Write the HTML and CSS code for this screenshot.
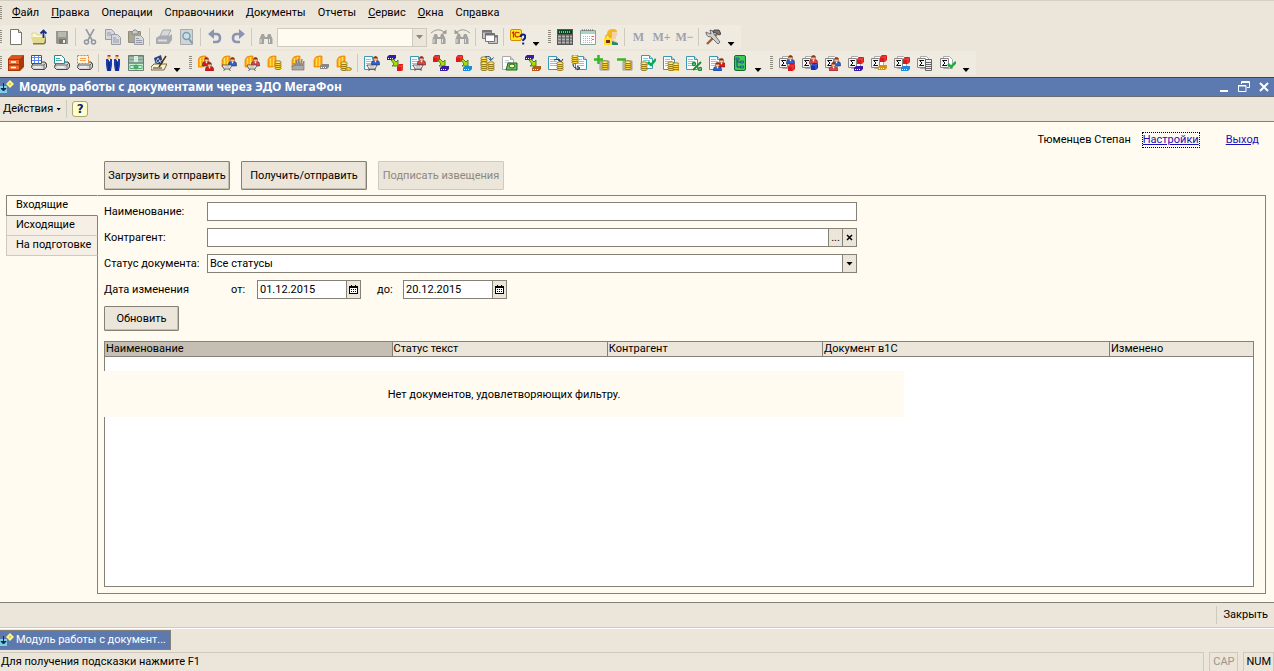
FILE: index.html
```html
<!DOCTYPE html>
<html lang="ru">
<head>
<meta charset="utf-8">
<title>Модуль работы с документами через ЭДО МегаФон</title>
<link rel="stylesheet" href="styles.css">
</head>
<body>
<svg class="defs" aria-hidden="true">
<defs>
<g id="doc"><path d="M.5 1.500h8l3 3v10h-11z" fill="#fff" stroke="#3c98b4"/><path d="M8.500 1.500v3h3" fill="#cde" stroke="#3c98b4"/><path d="M2 4.500h5M2 6.500h7M2 8.500h7M2 10.500h7" stroke="#7accdc"/></g>
<g id="graydoc"><path d="M2.500 1.500h8l3 3v10h-11z" fill="#fff" stroke="#aaa"/><path d="M10.500 1.500v3h3" fill="#ccc" stroke="#aaa"/><path d="M5 5.500h4M5 7.500h6" stroke="#ccc"/></g>
<g id="sigma"><path d="M3.500 1.500h6l3 3v9h-9z" fill="#fff" stroke="#aaa"/><path d="M.5 3.500h8v9h-8z" fill="#f4f4f4" stroke="#888"/><path d="M7 5.500H2.500L5 8l-2.500 2.500H7" fill="none" stroke="#111"/></g>
<g id="coin"><g fill="#ffd83a" stroke="#80640c" stroke-width=".8"><ellipse cx="4" cy="8.200" rx="3.200" ry="1.400"/><ellipse cx="4" cy="6.200" rx="3.200" ry="1.400"/><ellipse cx="4" cy="4.200" rx="3.200" ry="1.400"/><ellipse cx="4" cy="2.200" rx="3.200" ry="1.400" fill="#ffee80"/></g></g>
<g id="man"><path d="M.5 9V7q0-2.500 2.500-2.500h3q2.500 0 2.500 2.500v2z" fill="currentColor" stroke="#223" stroke-width=".5"/><circle cx="4.500" cy="2.900" r="2.100" fill="#ffc49a" stroke="#8a3a18" stroke-width=".5"/><path d="M2.300 2.500q0-2.300 2.200-2.300t2.200 2.300z" fill="#8a3214"/><path d="M3.500 4.800h2l-1 2z" fill="#fff"/></g>
<g id="cube"><path d="M0 2l2-2h5v5l-2 2H0z" fill="currentColor"/><path d="M0 2h5l2-2M5 2v5" fill="none" stroke="#fff" stroke-opacity=".4" stroke-width=".6"/></g>
<g id="bar"><path d="M0 2l2-2h7v3L7 5H0z" fill="currentColor"/><path d="M1 3.500h6" stroke="#fff" stroke-dasharray="1 1"/></g>
<g id="basket"><path d="M0 1h10L8 5H2zM3 5L1.500 7M7 5l1.500 2" fill="#fff" stroke="#444" stroke-width=".8"/><path d="M2 3h6M4 1v4M6 1v4" stroke="#888" stroke-width=".5"/></g>
<g id="arrow"><path d="M0 1l2-1 3 3 2-2v6H1l2-2z" fill="#a4e00a" stroke="#2f7000" stroke-width=".8"/></g>
<g id="book"><path d="M1 5q1-4 5-4h3v9l-3 2H1z" fill="#ff9c10"/><path d="M3.500 3v8M6.500 2v9" stroke="#ffe24a" stroke-width="1.600"/><path d="M1 5q1-4 5-4h3v9l-3 2H1z" fill="none" stroke="#e88400" stroke-width=".7"/></g>
<g id="tray"><path d="M1 10l3-3h10l1.500 2v3l-2 2.500H2.500l-2-2z" fill="#d6d6d6" stroke="#333" stroke-width=".9"/><path d="M1 10h12l2-2M13 10v4" fill="none" stroke="#555" stroke-width=".8"/><path d="M3 12h7" stroke="#fff"/></g>
<g id="binoc"><path d="M1.500 14V9l2-5H6l1 3h2l1-3h2.500l2 5v5H10V9H6v5z" fill="#a2a2a0"/><path d="M3 9v4M11.500 9v4" stroke="#e2e2e0"/></g>

<symbol id="i-new" viewBox="0 0 16 16"><path d="M2.500.500h8l3 3v12h-11z" fill="#fff" stroke="#77746c"/><path d="M10.500.500v3h3" fill="#ddd" stroke="#77746c"/></symbol>
<symbol id="i-open" viewBox="0 0 16 16"><path d="M1 7V4h4l1 2h6v3" fill="#fffbc8" stroke="#cfc060" stroke-width=".6"/><path d="M0 8h11l4-2-2 8H2z" fill="#e2da8c"/><path d="M2 14h11l2-8v8l-2 1.500H2z" fill="#817c38"/><path d="M12.500 9V2M9.500 4.500l3-3 3 3" fill="none" stroke="#19308c" stroke-width="1.800"/></symbol>
<symbol id="i-save" viewBox="0 0 16 16"><path d="M2 2h12v13H3l-1-1z" fill="#96978f"/><path d="M4 3h8v5H4z" fill="#b9baae"/><path d="M5 10h7v5H5z" fill="#777870"/><path d="M9 11h2v3H9z" fill="#eee"/></symbol>
<symbol id="i-cut" viewBox="0 0 16 16"><path d="M4 0l6 11M12 0L6 11" stroke="#9599a4" stroke-width="1.600"/><circle cx="4.500" cy="13" r="2" fill="none" stroke="#8e94a2" stroke-width="1.500"/><circle cx="11.500" cy="13" r="2" fill="none" stroke="#8e94a2" stroke-width="1.500"/></symbol>
<symbol id="i-copy" viewBox="0 0 16 16"><path d="M.5.500h6l3 3v7h-9z" fill="#d6d8de" stroke="#989ba8"/><path d="M2 4h4M2 6h5" stroke="#989ba8"/><path d="M6.500 5.500h6l3 3v7h-9z" fill="#d6d8de" stroke="#989ba8"/><path d="M8 9h3M8 11h6M8 13h6" stroke="#989ba8"/></symbol>
<symbol id="i-paste" viewBox="0 0 16 16"><path d="M.5 2.500h12v11H.5z" fill="#aaa78e" stroke="#8f8d7b"/><path d="M4 3l2-2h2l2 2v2H4z" fill="#ccc" stroke="#888"/><path d="M6.500 6.500h6l3 3v6h-9z" fill="#d6d8de" stroke="#989ba8"/><path d="M8 9.500h3M8 11.500h6M8 13.500h6" stroke="#989ba8"/></symbol>
<symbol id="i-print" viewBox="0 0 16 16"><path d="M4 7l3-6h8l-3 6z" fill="#d7d8da" stroke="#a4a6aa"/><path d="M0 9l3-2h10l3-2v6l-3 4H0z" fill="#a9abb0"/><path d="M2 11.500h9" stroke="#ddd" stroke-width="2"/></symbol>
<symbol id="i-preview" viewBox="0 0 16 16"><path d="M1.500.500h12v15h-12z" fill="#d0d4d6" stroke="#a7abb0"/><circle cx="7.500" cy="7" r="3.500" fill="#c7e1e8" stroke="#7a9fae" stroke-width="1.500"/><path d="M10 10l3.500 4.500" stroke="#7a9fae" stroke-width="2"/></symbol>
<symbol id="i-undo" viewBox="0 0 16 16"><path d="M5 5h4q4 0 4 4t-4 4H6" fill="none" stroke="#8c94b4" stroke-width="2.600"/><path d="M1 5l6-5v10z" fill="#8c94b4"/></symbol>
<symbol id="i-redo" viewBox="0 0 16 16"><path d="M11 5H7Q3 5 3 9t4 4h3" fill="none" stroke="#8c94b4" stroke-width="2.600"/><path d="M15 5L9 0v10z" fill="#8c94b4"/></symbol>
<symbol id="i-find" viewBox="0 0 16 16"><use href="#binoc" y="1"/></symbol>
<symbol id="i-findnext" viewBox="0 0 16 16"><use href="#binoc" y="1"/><path d="M0 4q7-6 13-1" fill="none" stroke="#9a9a94"/><path d="M15.500 5V.500l-5 4z" fill="#9a9a94"/></symbol>
<symbol id="i-findprev" viewBox="0 0 16 16"><use href="#binoc" y="1"/><path d="M16 4q-7-6-13-1" fill="none" stroke="#9a9a94"/><path d="M.5 5V.500l5 4z" fill="#9a9a94"/></symbol>
<symbol id="i-windows" viewBox="0 0 16 16"><path d="M.5 1.500h9v8h-9z" fill="#c8c8c8" stroke="#777"/><path d="M.5 2.500h9" stroke="#777" stroke-width="2"/><path d="M6.500 6.500h9v8h-9z" fill="#c8c8c8" stroke="#777"/><path d="M6.500 7.500h9" stroke="#777" stroke-width="2"/><path d="M3.500 4.500h9v8h-9z" fill="#fff" stroke="#777"/><path d="M3 5.500h10" stroke="#6f7076" stroke-width="2"/></symbol>
<symbol id="i-help1c" viewBox="0 0 16 16"><rect x=".5" y=".5" width="11" height="11" rx="1.500" fill="#ffe51c" stroke="#d09000"/><path d="M2 4l1.500-1v5.500M9.500 4Q5 2 5 5.500T9.500 7.500" fill="none" stroke="#d12a00" stroke-width="1.200"/><path d="M10.500 8q0-2.500 2.500-2.500t2.200 2.500q0 1.500-2 3v1M13.200 13.500v2" fill="none" stroke="#12207c" stroke-width="2"/></symbol>
<symbol id="i-calc" viewBox="0 0 16 16"><path d="M0 0h16v16H0z" fill="#565656"/><path d="M1 1h14v4H1z" fill="#064a1c"/><path d="M2 3h12" stroke="#3fe070" stroke-width="2" stroke-dasharray="1 1"/><path d="M1 7.500h14M1 10.500h14M1 13.500h14" stroke="#b4b4b4" stroke-width="2" stroke-dasharray="3 1"/></symbol>
<symbol id="i-cal" viewBox="0 0 16 16"><path d="M.5 1.500h15v14H.5z" fill="#fff" stroke="#8aa09c"/><path d="M1 3.500h14" stroke="#a8d4c8" stroke-width="3"/><path d="M2 1h12" stroke="#555" stroke-dasharray="1 1"/><path d="M3 7.500h9M3 9.500h9M3 11.500h9M3 13.500h9" stroke="#9ac4bc" stroke-dasharray="1 1"/><path d="M12 7.500h2M12 10.500h2" stroke="#e66"/></symbol>
<symbol id="i-lock" viewBox="0 0 16 16"><path d="M6 9V4q0-4 4-4 4 0 4 4l1 2-2 1v3h-3l4 3v3H8z" fill="#f6d0a8"/><path d="M4 5q0-5 6-5 4 0 4 3H9v6H6z" fill="#f4b824"/><path d="M9 12l6 2v2H9z" fill="#288a72"/><path d="M3 10V7.500Q3 6 5 6t2 1.500V10" fill="none" stroke="#e8b800" stroke-width="1.500"/><path d="M1 9h8v7H1z" fill="#ffe22b"/><path d="M3 11h4v3H3z" fill="#7a3018"/></symbol>
<symbol id="i-tools" viewBox="0 0 16 16"><path d="M2 15L12 5" stroke="#a4602c" stroke-width="2.400"/><path d="M3 4l3 1-1-4q4 0 4 4l6 8-2 2-7-7Q1 8 1 3z" fill="#d0d0d0" stroke="#555" stroke-width=".8"/><path d="M9 1h5l2 4-2 1-3-2-3-1z" fill="#777" stroke="#333" stroke-width=".8"/></symbol>

<symbol id="i-cabinet" viewBox="0 0 16 16"><path d="M0 4l4-4h12v12l-4 4H0z" fill="#a8380c"/><path d="M1 5h10v4H1zM1 10.500h10v4H1z" fill="#f06a24"/><path d="M0 4l4-4h12l-4 4z" fill="#d8541c"/><path d="M3 7h5M3 12.500h5" stroke="#fff" stroke-width="1.500"/></symbol>
<symbol id="i-tray1" viewBox="0 0 16 16"><use href="#tray"/><path d="M.5.500h10v8H.5z" fill="#fff" stroke="#2354c6"/><path d="M1 2.500h9M1 5.500h9M3.500 1v7M7.500 1v7" stroke="#5c8af0"/></symbol>
<symbol id="i-tray2" viewBox="0 0 16 16"><use href="#tray"/><path d="M.5.500h7l3 3v5H.5z" fill="#fff" stroke="#218c8c"/><path d="M2 3.500h4M2 5.500h6" stroke="#3ab0b0"/></symbol>
<symbol id="i-tray3" viewBox="0 0 16 16"><use href="#tray"/><path d="M.5.500h11v8H.5z" fill="#fff3dc" stroke="#ef7a1c" stroke-dasharray="2 1"/><path d="M3 3.500h6M3 5.500h6" stroke="#f4a050"/></symbol>
<symbol id="i-people" viewBox="0 0 16 16"><path d="M1 4h6v6l-1 6H2l-1-6zM9 4h6v6l-1 6h-4l-1-6z" fill="#1a3cb0"/><path d="M4 5v11M12 5v11" stroke="#051c56"/><path d="M3 4h2v3zM11 4h2v3z" fill="#fff"/><path d="M2.500 1h3v3h-3zM10.500 1h3v3h-3z" fill="#f7bd8c"/><path d="M2.500 0h3v1.500h-3zM10.500 0h3v1.500h-3z" fill="#a83c18"/></symbol>
<symbol id="i-money" viewBox="0 0 16 16"><path d="M.5.500h15v15H.5z" fill="#7c9c8c" stroke="#6a7c74"/><path d="M1 3h14M1 6h14" stroke="#c9d9cf"/><path d="M1 9h14v6H1z" fill="#c6f4d2"/><path d="M2 10.500h12v3H2z" fill="none" stroke="#58b078"/><ellipse cx="8" cy="12" rx="2.500" ry="2.500" fill="#4aa869"/><path d="M6 1h4v6H6z" fill="#d8ecdf"/></symbol>
<symbol id="i-signs" viewBox="0 0 16 16"><path d="M3 3l7-3 2 8-7 3z" fill="#284583"/><path d="M5 7l2-4 3 5M4 9l7-4" fill="none" stroke="#dfe6f6" stroke-width=".8"/><path d="M0 12l3-3h13l-3 6H0z" fill="#f8f0cc" stroke="#554520" stroke-width=".8"/><path d="M8 12l7-11" stroke="#55330d" stroke-width="1.500"/><path d="M2 13h9" stroke="#333"/></symbol>
<symbol id="i-b1" viewBox="0 0 16 16"><use href="#book" x="-1"/><use href="#man" x="4" y="2" class="red"/><use href="#man" x="7" y="7" class="red"/></symbol>
<symbol id="i-b2" viewBox="0 0 16 16"><use href="#book"/><use href="#man" x="7" y="2" class="blue"/><use href="#basket" x="1" y="9"/></symbol>
<symbol id="i-b3" viewBox="0 0 16 16"><use href="#book"/><use href="#man" x="7" y="2" class="rose"/><use href="#basket" x="3" y="9"/></symbol>
<symbol id="i-b4" viewBox="0 0 16 16"><use href="#book"/><use href="#coin" x="7" y="5"/></symbol>
<symbol id="i-b5" viewBox="0 0 16 16"><use href="#book" x="1"/><path d="M2 15v-4h2V8l2 3V5l2 6V4l2 7 2-7v7l2-5v9z" fill="#aaa" stroke="#666" stroke-width=".6"/></symbol>
<symbol id="i-b6" viewBox="0 0 16 16"><use href="#book"/><use href="#bar" x="7" y="9" class="gray"/></symbol>
<symbol id="i-b7" viewBox="0 0 16 16"><use href="#book"/><use href="#coin" x="4" y="6"/><ellipse cx="12.500" cy="14" rx="3" ry="1.400" fill="#ffd83a" stroke="#80640c" stroke-width=".8"/></symbol>
<symbol id="i-d1" viewBox="0 0 16 16"><use href="#doc"/><use href="#man" x="7" y="1" class="blue"/><use href="#basket" x="3" y="9"/></symbol>
<symbol id="i-a1" viewBox="0 0 16 16"><use href="#bar" class="violet"/><use href="#arrow" x="4" y="4"/><use href="#cube" x="10" y="9" class="red"/></symbol>
<symbol id="i-d2" viewBox="0 0 16 16"><use href="#doc"/><use href="#man" x="7" y="1" class="rose"/><use href="#basket" x="3" y="9"/></symbol>
<symbol id="i-a2" viewBox="0 0 16 16"><use href="#cube" class="red"/><use href="#arrow" x="5" y="4"/><use href="#bar" x="7" y="11" class="violet"/></symbol>
<symbol id="i-a3" viewBox="0 0 16 16"><use href="#cube" class="red"/><use href="#arrow" x="5" y="4"/><use href="#bar" x="7" y="11" class="sky"/></symbol>
<symbol id="i-cc" viewBox="0 0 16 16"><use href="#coin" x="1" y="1"/><use href="#coin" x="1" y="6"/><use href="#coin" x="8" y="6"/><path d="M6 2q6-2 6 3M9.500 3.500l2.500 2 2.500-3" fill="none" stroke="#19486c"/></symbol>
<symbol id="i-d3" viewBox="0 0 16 16"><use href="#graydoc" x="-2"/><path d="M6 8h9v7H4z" fill="#76bd63" stroke="#176420"/><ellipse cx="10" cy="11" rx="3" ry="2" fill="#f4f6a0" stroke="#176420"/></symbol>
<symbol id="i-a4" viewBox="0 0 16 16"><use href="#bar" class="violet"/><use href="#arrow" x="4" y="4"/><use href="#bar" x="7" y="11" class="brown"/></symbol>
<symbol id="i-d4" viewBox="0 0 16 16"><use href="#doc"/><path d="M6 5q6-2 7 2M10 5l3 2 2-3" fill="none" stroke="#122a60"/><use href="#coin" x="8" y="6"/></symbol>
<symbol id="i-d5" viewBox="0 0 16 16"><use href="#doc" x="4"/><use href="#coin" x="0" y="-1"/><path d="M2 9q0 5 6 4M6 11l3 2-3 2" fill="none" stroke="#122a60"/></symbol>
<symbol id="i-plus" viewBox="0 0 16 16"><path d="M6 6h9v9H6z" fill="#c8c8c4" stroke="#999"/><use href="#coin" x="7" y="5"/><path d="M4.500 0v9M0 4.500h9" stroke="#38b424" stroke-width="2.500"/></symbol>
<symbol id="i-minus" viewBox="0 0 16 16"><path d="M6 6h9v9H6z" fill="#c8c8c4" stroke="#999"/><use href="#coin" x="7" y="5"/><path d="M0 4.500h9" stroke="#38b424" stroke-width="2.500"/></symbol>
<symbol id="i-check" viewBox="0 0 16 16"><use href="#doc" x="1" y="-1"/><path d="M8 7l3 3 5-6" fill="none" stroke="#0bac4f" stroke-width="2.500"/><use href="#coin" y="6"/></symbol>
<symbol id="i-d6" viewBox="0 0 16 16"><use href="#doc"/><use href="#coin" x="4" y="6"/><use href="#coin" x="9" y="7"/></symbol>
<symbol id="i-pct" viewBox="0 0 16 16"><use href="#doc"/><path d="M15 7l-8 8" stroke="#16902e" stroke-width="2"/><circle cx="8" cy="9" r="1.500" fill="none" stroke="#16902e" stroke-width="1.500"/><circle cx="14" cy="14" r="1.500" fill="none" stroke="#16902e" stroke-width="1.500"/></symbol>
<symbol id="i-d7" viewBox="0 0 16 16"><use href="#doc"/><use href="#man" x="8" y="3" class="red"/><use href="#man" x="4" y="7" class="blue"/></symbol>
<symbol id="i-tree" viewBox="0 0 16 16"><rect x="2.500" y=".5" width="11" height="15" rx="1.500" fill="#3ccb54" stroke="#176c33"/><path d="M5 3v9h4M5 7h4" fill="none" stroke="#134c76"/><path d="M4 3h3v2H4zM8.500 6h3v2h-3zM8.500 11h3v2h-3z" fill="#5c9ab0" stroke="#134c76" stroke-width=".7"/></symbol>
<symbol id="i-s1" viewBox="0 0 16 16"><use href="#sigma"/><use href="#man" x="7" y="0" class="blue"/><use href="#cube" x="9" y="9" class="red"/></symbol>
<symbol id="i-s2" viewBox="0 0 16 16"><use href="#sigma"/><use href="#man" x="7" y="0" class="rose"/><use href="#cube" x="9" y="8" class="navy"/></symbol>
<symbol id="i-s3" viewBox="0 0 16 16"><use href="#sigma"/><use href="#man" x="7" y="2" class="blue"/><use href="#man" x="4" y="7" class="rose"/></symbol>
<symbol id="i-s4" viewBox="0 0 16 16"><use href="#sigma"/><use href="#cube" x="9" y="2" class="red"/><use href="#bar" x="6" y="11" class="violet"/></symbol>
<symbol id="i-s5" viewBox="0 0 16 16"><use href="#sigma"/><use href="#cube" x="9" y="0" class="red"/><use href="#bar" x="7" y="10" class="amber"/></symbol>
<symbol id="i-s6" viewBox="0 0 16 16"><use href="#sigma"/><use href="#cube" x="9" y="2" class="red"/><use href="#bar" x="7" y="11" class="sky"/></symbol>
<symbol id="i-s7" viewBox="0 0 16 16"><use href="#sigma"/><path d="M8.500 4.500h6v11h-6z" fill="#eee" stroke="#666"/><path d="M9 7.500h5M9 9.500h5M9 11.500h5M9 13.500h5" stroke="#666"/></symbol>
<symbol id="i-s8" viewBox="0 0 16 16"><use href="#sigma"/><path d="M8 9l3 3 5-5" fill="none" stroke="#20ae42" stroke-width="2.500"/></symbol>
<symbol id="i-module" viewBox="0 0 14 14"><path d="M0 6h7v7H0z" fill="#7fd0dc"/><path d="M3.500 3v6M1 8.500L3.500 11 6 8.500z" fill="#10246c" stroke="#10246c"/><path d="M10 0l4 4-4 4-4-4z" fill="#fff380"/><path d="M9.500 4h1" stroke="#765800"/></symbol>
<symbol id="i-date" viewBox="0 0 9 9"><path d="M0 1h9v8H0z"/><path d="M1 3h7v5H1z" fill="#fff"/><path d="M2 4.500h6M2 6.500h6" stroke="#000" stroke-dasharray="1 1"/><path d="M2 0h1v1H2zM6 0h1v1H6z"/></symbol>
</defs>
</svg>

<header class="chrome">
  <nav class="menu" aria-label="Главное меню">
    <span class="grip"></span>
    <button><u>Ф</u>айл</button><button><u>П</u>равка</button><button>Операции</button><button>Справочники</button><button>Документы</button><button>Отчеты</button><button><u>С</u>ервис</button><button><u>О</u>кна</button><button>Сп<u>р</u>авка</button>
  </nav>
  <div class="toolbar">
    <div class="group">
      <span class="grip"></span>
      <button aria-label="Новый"><svg><use href="#i-new"/></svg></button>
      <button aria-label="Открыть"><svg><use href="#i-open"/></svg></button>
      <button aria-label="Сохранить"><svg><use href="#i-save"/></svg></button>
      <i class="sep"></i>
      <button aria-label="Вырезать"><svg><use href="#i-cut"/></svg></button>
      <button aria-label="Копировать"><svg><use href="#i-copy"/></svg></button>
      <button aria-label="Вставить"><svg><use href="#i-paste"/></svg></button>
      <i class="sep"></i>
      <button aria-label="Печать"><svg><use href="#i-print"/></svg></button>
      <button aria-label="Просмотр"><svg><use href="#i-preview"/></svg></button>
      <i class="sep"></i>
      <button aria-label="Отменить"><svg><use href="#i-undo"/></svg></button>
      <button aria-label="Повторить"><svg><use href="#i-redo"/></svg></button>
      <i class="sep"></i>
      <button aria-label="Найти"><svg><use href="#i-find"/></svg></button>
      <div class="search"><input type="text" aria-label="Строка поиска"><button aria-label="История поиска"><b class="tri"></b></button></div>
      <button aria-label="Найти следующий"><svg><use href="#i-findnext"/></svg></button>
      <button aria-label="Найти предыдущий"><svg><use href="#i-findprev"/></svg></button>
      <i class="sep"></i>
      <button aria-label="Окна"><svg><use href="#i-windows"/></svg></button>
      <i class="sep"></i>
      <button aria-label="Помощь"><svg><use href="#i-help1c"/></svg></button>
      <button class="more" aria-label="Ещё"><b class="tri"></b></button>
    </div>
    <div class="group">
      <span class="grip"></span>
      <button aria-label="Калькулятор"><svg><use href="#i-calc"/></svg></button>
      <button aria-label="Календарь"><svg><use href="#i-cal"/></svg></button>
      <button aria-label="Пользователи"><svg><use href="#i-lock"/></svg></button>
      <i class="sep"></i>
      <button class="mem">M</button><button class="mem">M+</button><button class="mem">M−</button>
      <i class="sep"></i>
      <button aria-label="Настройка"><svg><use href="#i-tools"/></svg></button>
      <button class="more" aria-label="Ещё"><b class="tri"></b></button>
    </div>
  </div>
  <div class="toolbar">
    <div class="group">
      <span class="grip"></span>
      <button aria-label="Журнал"><svg><use href="#i-cabinet"/></svg></button>
      <button aria-label="Журнал операций"><svg><use href="#i-tray1"/></svg></button>
      <button aria-label="Журнал документов"><svg><use href="#i-tray2"/></svg></button>
      <button aria-label="Журнал проводок"><svg><use href="#i-tray3"/></svg></button>
      <i class="sep"></i>
      <button aria-label="Контрагенты"><svg><use href="#i-people"/></svg></button>
      <button aria-label="Деньги"><svg><use href="#i-money"/></svg></button>
      <button aria-label="Подписи"><svg><use href="#i-signs"/></svg></button>
      <button class="more" aria-label="Ещё"><b class="tri"></b></button>
    </div>
    <div class="group">
      <span class="grip"></span>
      <button aria-label="Заказы"><svg><use href="#i-b1"/></svg></button>
      <button aria-label="Заказ покупателя"><svg><use href="#i-b2"/></svg></button>
      <button aria-label="Заказ поставщику"><svg><use href="#i-b3"/></svg></button>
      <button aria-label="Касса"><svg><use href="#i-b4"/></svg></button>
      <button aria-label="Производство"><svg><use href="#i-b5"/></svg></button>
      <button aria-label="Банк"><svg><use href="#i-b6"/></svg></button>
      <button aria-label="Затраты"><svg><use href="#i-b7"/></svg></button>
      <i class="sep"></i>
      <button aria-label="Реализация"><svg><use href="#i-d1"/></svg></button>
      <button aria-label="Отгрузка"><svg><use href="#i-a1"/></svg></button>
      <button aria-label="Поступление"><svg><use href="#i-d2"/></svg></button>
      <button aria-label="Перемещение"><svg><use href="#i-a2"/></svg></button>
      <button aria-label="Списание"><svg><use href="#i-a3"/></svg></button>
      <button aria-label="Обмен валют"><svg><use href="#i-cc"/></svg></button>
      <button aria-label="Платёж"><svg><use href="#i-d3"/></svg></button>
      <button aria-label="Комплектация"><svg><use href="#i-a4"/></svg></button>
      <button aria-label="Исходящий платёж"><svg><use href="#i-d4"/></svg></button>
      <button aria-label="Входящий платёж"><svg><use href="#i-d5"/></svg></button>
      <button aria-label="Приход"><svg><use href="#i-plus"/></svg></button>
      <button aria-label="Расход"><svg><use href="#i-minus"/></svg></button>
      <button aria-label="Оплачено"><svg><use href="#i-check"/></svg></button>
      <button aria-label="Счёт"><svg><use href="#i-d6"/></svg></button>
      <button aria-label="Скидки"><svg><use href="#i-pct"/></svg></button>
      <button aria-label="Взаиморасчёты"><svg><use href="#i-d7"/></svg></button>
      <button aria-label="Структура"><svg><use href="#i-tree"/></svg></button>
      <button class="more" aria-label="Ещё"><b class="tri"></b></button>
    </div>
    <div class="group">
      <span class="grip"></span>
      <button aria-label="Отчёт по продажам"><svg><use href="#i-s1"/></svg></button>
      <button aria-label="Отчёт по закупкам"><svg><use href="#i-s2"/></svg></button>
      <button aria-label="Отчёт по контрагентам"><svg><use href="#i-s3"/></svg></button>
      <button aria-label="Отчёт по товарам"><svg><use href="#i-s4"/></svg></button>
      <button aria-label="Отчёт по партиям"><svg><use href="#i-s5"/></svg></button>
      <button aria-label="Отчёт по складам"><svg><use href="#i-s6"/></svg></button>
      <button aria-label="Ведомость"><svg><use href="#i-s7"/></svg></button>
      <button aria-label="Проверка"><svg><use href="#i-s8"/></svg></button>
      <button class="more" aria-label="Ещё"><b class="tri"></b></button>
    </div>
  </div>
</header>

<main class="window">
  <div class="title">
    <svg class="module" aria-hidden="true"><use href="#i-module"/></svg>
    <h1>Модуль работы с документами через ЭДО МегаФон</h1>
    <button aria-label="Свернуть"><svg viewBox="0 0 12 12"><path d="M2 10h8" stroke="#fff" stroke-width="2"/></svg></button>
    <button aria-label="Восстановить"><svg viewBox="0 0 12 12"><path d="M3.500 3V.500h8v6H9M3 1.500h9" fill="none" stroke="#fff"/><path d="M.5 4.500h7.500v6H.5zM0 5h8" fill="none" stroke="#fff"/></svg></button>
    <button aria-label="Закрыть окно"><svg viewBox="0 0 12 12"><path d="M2 2l8 8M10 2l-8 8" stroke="#fff" stroke-width="2"/></svg></button>
  </div>
  <div class="actions">
    <button class="act">Действия <b class="tri"></b></button>
    <i class="rule"></i>
    <button class="help" aria-label="Справка">?</button>
  </div>
  <div class="content">
    <div class="user"><span>Тюменцев Степан</span><a class="focused" href="#settings">Настройки</a><a class="exit" href="#exit">Выход</a></div>
    <div class="commands">
      <button class="btn">Загрузить и отправить</button>
      <button class="btn">Получить/отправить</button>
      <button class="btn" disabled>Подписать извещения</button>
    </div>
    <div class="split">
      <div class="tabs" role="tablist">
        <button role="tab" aria-selected="true">Входящие</button>
        <button role="tab" aria-selected="false">Исходящие</button>
        <button role="tab" aria-selected="false">На подготовке</button>
      </div>
      <section class="panel">
        <form class="filter">
          <label for="name">Наименование:</label>
          <div class="field"><input id="name" type="text"></div>
          <label for="partner">Контрагент:</label>
          <div class="field"><input id="partner" type="text"><button type="button" aria-label="Выбрать">...</button><button type="button" aria-label="Очистить"><svg viewBox="0 0 9 9"><path d="M2 2l5 5M7 2L2 7" stroke="#000" stroke-width="1.500"/></svg></button></div>
          <label for="status">Статус документа:</label>
          <div class="field pick"><select id="status"><option>Все статусы</option></select><span class="cap"><b class="tri"></b></span></div>
          <span>Дата изменения</span>
          <div class="dates">
            <label for="from">от:</label>
            <div class="field"><input id="from" type="text" value="01.12.2015"><button type="button" aria-label="Календарь"><svg viewBox="0 0 9 9"><use href="#i-date"/></svg></button></div>
            <label for="to">до:</label>
            <div class="field"><input id="to" type="text" value="20.12.2015"><button type="button" aria-label="Календарь"><svg viewBox="0 0 9 9"><use href="#i-date"/></svg></button></div>
          </div>
          <button type="button" class="btn refresh">Обновить</button>
        </form>
        <div class="list">
          <table>
            <thead><tr><th class="wide sorted">Наименование</th><th class="mid">Статус текст</th><th class="mid">Контрагент</th><th class="wide">Документ в1С</th><th>Изменено</th></tr></thead>
          </table>
          <p class="empty">Нет документов, удовлетворяющих фильтру.</p>
        </div>
      </section>
    </div>
  </div>
  <div class="bottom"><i class="rule"></i><button>Закрыть</button></div>
</main>
<div class="tasks"><button class="task"><svg class="module" aria-hidden="true"><use href="#i-module"/></svg>Модуль работы с документ...</button></div>
<footer class="status"><span class="hint">Для получения подсказки нажмите F1</span><span class="key off">CAP</span><span class="key">NUM</span></footer>
</body>
</html>
```

FILE: styles.css
```css
* { box-sizing: border-box; }
body {
  --face: #ebe5da;
  --line: #858177;
  --soft: #cfcabe;
  --cream: #fffbf0;
  margin: 0;
  min-height: 100vh;
  display: flex;
  flex-direction: column;
  background: var(--face);
  color: #000;
  font: 11px/14px Roboto, "Liberation Sans", sans-serif;
}
button, input, select { font: inherit; color: inherit; margin: 0; padding: 0; border: 0; border-radius: 0; background: none; }
i { display: block; }
.defs { position: absolute; width: 0; height: 0; }
.red { color: #e01818; }
.blue { color: #2862d8; }
.navy { color: #1630b8; }
.rose { color: #e0424a; }
.gray { color: #888; }
.violet { color: #3a18a8; }
.sky { color: #1a8ae0; }
.brown { color: #b85a18; }
.amber { color: #d89010; }
.tri { display: block; width: 7px; height: 4px; background: currentColor; clip-path: polygon(0 0, 100% 0, 50% 100%); }

.chrome { border-top: 1px solid #d5cfc2; padding-bottom: 1px; }
.grip { width: 3px; height: 14px; background: repeating-linear-gradient(#8f8b80 0 1px, transparent 1px 2px); }
.menu { display: flex; align-items: center; height: 23px; }
.menu button { padding: 0 6px; }
.group:first-child .grip { width: 2px; margin-right: 2px; }
.menu .grip { width: 2px; margin-right: 4px; }
.toolbar { display: flex; height: 26px; align-items: center; }
.group { display: flex; align-items: center; height: 24px; padding-right: 3px; background: #f0ebe1; }
.group + .group { padding-left: 2px; }
.group + .group .grip { margin: 0 2px 0 0; }
.group > button { width: 23px; height: 22px; display: flex; align-items: center; justify-content: center; }
.group > button svg { width: 16px; height: 16px; }
.group > .more { width: 14px; align-items: flex-end; padding-bottom: 2px; }
.group > .mem { font: bold 12px/14px "Liberation Serif", serif; color: #a0a2ae; }
.sep { width: 1px; height: 18px; margin: 0 2px; background: var(--soft); }
.search { display: flex; width: 150px; height: 19px; border: 1px solid var(--soft); background: var(--cream); }
.search input { flex: 1; min-width: 0; }
.search button { width: 14px; display: flex; align-items: center; justify-content: center; background: var(--face); border-left: 1px solid var(--soft); color: #8a867c; }

.window { flex: 1; display: flex; flex-direction: column; }
.title { display: flex; align-items: center; height: 20px; padding-right: 4px; background: #5c7ab0; border-top: 1px solid #3e4450; border-bottom: 1px solid #6b6c70; color: #fff; }
.title h1 { flex: 1; margin: 0 0 0 5px; font: bold 12px/16px "Noto Sans", sans-serif; }
.title button { width: 12px; height: 12px; margin-left: 8px; }
.title button svg { display: block; width: 12px; height: 12px; }
.module { width: 14px; height: 14px; flex: none; }
.actions { display: flex; align-items: center; height: 25px; padding-left: 3px; border-bottom: 1px solid var(--line); }
.act { display: flex; align-items: center; gap: 3px; }
.act .tri { width: 5px; height: 3px; }
.rule { width: 1px; height: 18px; background: var(--soft); }
.actions .rule { margin: 0 5px; }
.help { width: 16px; height: 16px; border: 1px solid #aaa57c; border-radius: 3px; background: #ffffc8; color: #12207c; font: bold 12px/14px "DejaVu Sans", sans-serif; }

.content { flex: 1; display: flex; flex-direction: column; padding: 11px 8px 8px 6px; background: var(--cream); border-bottom: 1px solid var(--line); }
.user { display: flex; justify-content: flex-end; align-items: center; gap: 12px; padding-right: 7px; }
.user a { color: #1a10b4; }
.focused { outline: 1px dotted #000; }
.exit { margin-left: 15px; }
.commands { display: flex; gap: 11px; margin: 14px 0 5px 98px; }
.btn { border: 1px solid var(--line); border-radius: 1px; background: var(--face); box-shadow: inset -1px -1px #c4beb1; }
.commands .btn { min-width: 126px; height: 29px; white-space: nowrap; }
.btn:disabled { color: #8c887e; border-color: var(--soft); box-shadow: none; }
.split { flex: 1; display: flex; }
.tabs { width: 92px; margin-right: -1px; z-index: 1; }
.tabs button { display: block; width: 92px; height: 20px; padding: 0 0 1px 9px; text-align: left; white-space: nowrap; border: 1px solid var(--soft); border-width: 0 1px 1px; border-right-color: var(--line); background: #f6efe5; }
.tabs [aria-selected="true"] { height: 21px; border: 1px solid var(--line); border-right-color: var(--cream); background: var(--cream); }
.panel { flex: 1; display: flex; flex-direction: column; padding: 6px 11px 6px 6px; border: 1px solid var(--line); }
.filter { display: grid; grid-template-columns: 103px minmax(0, 650px); row-gap: 7px; align-items: center; }
.filter > span, .filter > label { white-space: nowrap; }
.field { display: flex; height: 19px; border: 1px solid var(--line); background: #fff; }
.field input { flex: 1; min-width: 0; padding: 0 2px; }
.field button, .cap { width: 14px; flex: none; display: flex; align-items: center; justify-content: center; background: var(--face); border-left: 1px solid var(--line); }
.field button svg { width: 9px; height: 9px; }
.pick { display: grid; grid-template-columns: 1fr 14px; }
.pick select { grid-area: 1 / 1 / 2 / 3; appearance: none; padding: 0 2px; outline: 0; }
.cap { grid-area: 1 / 2; pointer-events: none; }
.dates { display: flex; align-items: center; padding-left: 24px; }
.dates label { width: 26px; }
.dates .field { width: 104px; margin-right: 16px; }
.refresh { width: 75px; height: 25px; }
.list { position: relative; flex: 1; margin-top: 10px; border: 1px solid var(--line); background: #fff; }
table { width: 100%; border-collapse: collapse; table-layout: fixed; }
th { height: 14px; padding: 0 1px; font-weight: normal; text-align: left; line-height: 14px; background: var(--face); border-bottom: 1px solid var(--line); }
th + th { border-left: 1px solid var(--line); }
.wide { width: 25%; }
.mid { width: 18.75%; }
.sorted { background: #c5beb2; }
.empty { position: absolute; left: -1px; top: 29px; width: 800px; max-width: 100%; margin: 0; padding: 17px 0 15px; text-align: center; background: var(--cream); }
.bottom { display: flex; justify-content: flex-end; align-items: center; gap: 7px; height: 25px; padding-right: 6px; border-bottom: 1px solid var(--soft); }

.tasks { height: 24px; padding-top: 1px; border-top: 1px solid #fff; }
.task { display: flex; align-items: center; gap: 2px; height: 20px; padding-right: 4px; background: #5c7ab0; border: 1px solid #858177; border-left: 0; color: #fff; }
.status { display: flex; gap: 5px; height: 19px; }
.status span { border: 1px solid var(--soft); border-bottom: 0; line-height: 18px; padding: 0 2px; }
.status .hint { flex: 1; border-left: 0; padding-left: 1px; }
.status .key { min-width: 29px; text-align: center; }
.off { color: #9a968c; }
```
